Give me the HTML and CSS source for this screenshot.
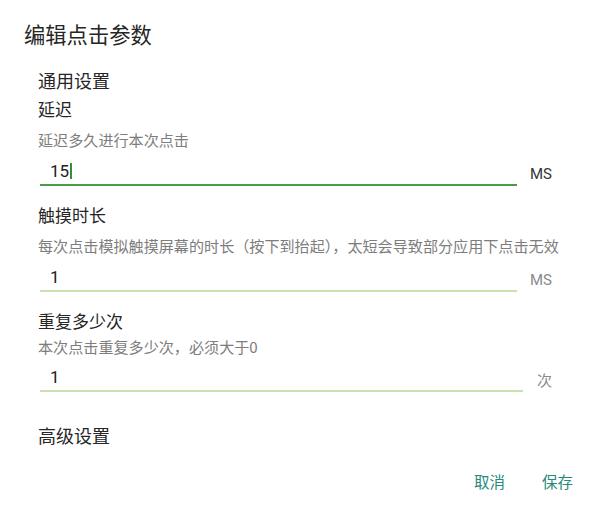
FILE: index.html
```html
<!DOCTYPE html>
<html lang="zh">
<head>
<meta charset="utf-8">
<link rel="stylesheet" href="styles.css">
</head>
<body>
<div class="dialog">
  <div class="title">编辑点击参数</div>
  <div class="content">
    <div class="section">通用设置</div>

    <div class="label first">延迟</div>
    <div class="desc">延迟多久进行本次点击</div>
    <div class="row">
      <div class="field focused"><span class="value">15</span><span class="caret"></span></div>
      <div class="unit dark">MS</div>
    </div>

    <div class="label">触摸时长</div>
    <div class="desc">每次点击模拟触摸屏幕的时长（按下到抬起），太短会导致部分应用下点击无效</div>
    <div class="row">
      <div class="field"><span class="value">1</span></div>
      <div class="unit">MS</div>
    </div>

    <div class="label">重复多少次</div>
    <div class="desc tight">本次点击重复多少次，必须大于0</div>
    <div class="row wide">
      <div class="field"><span class="value">1</span></div>
      <div class="unit cjk">次</div>
    </div>

    <div class="section advanced">高级设置</div>
  </div>
  <div class="actions">
    <div class="btn">取消</div>
    <div class="btn">保存</div>
  </div>
</div>
</body>
</html>
```

FILE: styles.css
```css
html, body {
  margin: 0;
  padding: 0;
  background: #ffffff;
}
body {
  font-family: "Noto Sans CJK SC", Roboto, sans-serif;
  color: #212121;
}
.dialog {
  width: 603px;
  height: 506px;
  box-sizing: border-box;
  padding: 20px 24px 0 24px;
}
.title {
  font-size: 21.3px;
  line-height: 28px;
  color: #262626;
}
.content {
  padding-left: 14px;
  padding-right: 27px;
}
.section {
  font-size: 18px;
  line-height: 24px;
  margin-top: 20px;
  color: #262626;
}
.label {
  font-size: 17px;
  line-height: 24px;
  margin-top: 17px;
  color: #262626;
}
.label.first {
  margin-top: 5px;
}
.desc {
  font-size: 15.1px;
  line-height: 20px;
  margin-top: 8px;
  color: #7d7d7d;
  white-space: nowrap;
}
.desc.tight {
  margin-top: 3px;
}
.row {
  display: flex;
  align-items: center;
  gap: 13px;
  margin-top: 10px;
}
.field {
  flex: 1;
  display: flex;
  align-items: center;
  height: 24px;
  padding: 0 0 1px 10px;
  margin-left: 2px;
  border-bottom: 2px solid #c9e1ae;
  font-family: Roboto, "Noto Sans CJK SC", sans-serif;
  font-size: 17px;
  color: #222222;
}
.field.focused {
  border-bottom-color: #4a9a47;
}
.caret {
  display: inline-block;
  width: 2px;
  height: 16px;
  margin-left: 1px;
  background: #3b8c37;
}
.unit {
  width: 22px;
  font-family: Roboto, sans-serif;
  font-size: 15px;
  line-height: 20px;
  color: #8a8a8a;
  padding-top: 3px;
}
.unit.dark {
  color: #333333;
}
.row.wide {
  gap: 14px;
  margin-top: 9px;
}
.unit.cjk {
  width: 15px;
  font-family: "Noto Sans CJK SC", sans-serif;
  font-size: 15px;
}
.section.advanced {
  margin-top: 31px;
}
.actions {
  display: flex;
  justify-content: flex-end;
  gap: 37px;
  margin-top: 24px;
  padding-right: 6px;
}
.btn {
  font-size: 15.5px;
  line-height: 20px;
  color: #268a7b;
}
```
